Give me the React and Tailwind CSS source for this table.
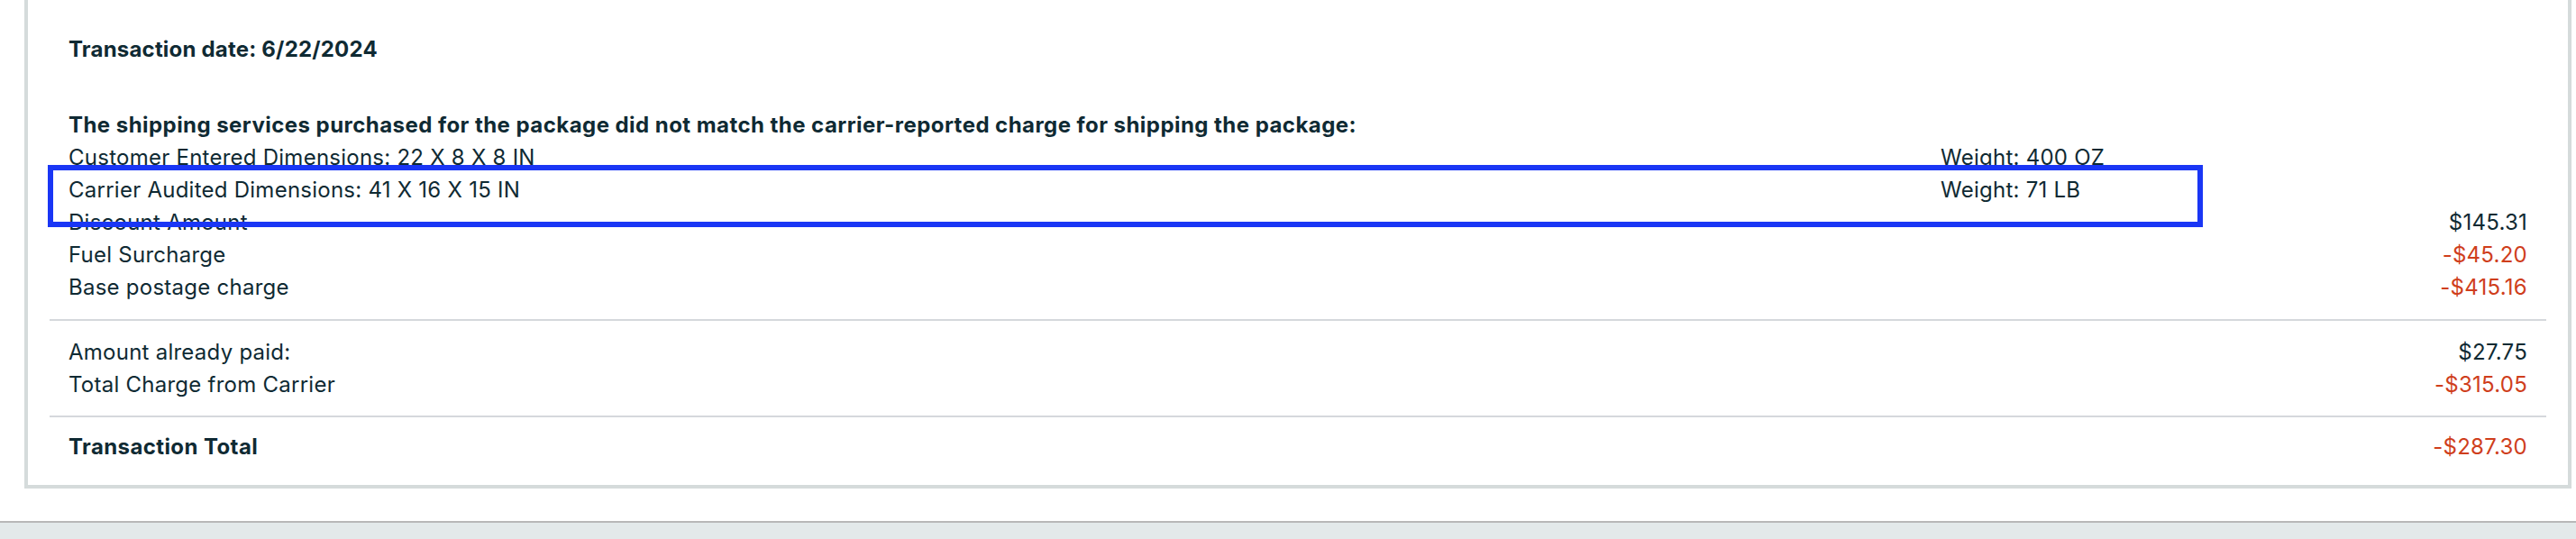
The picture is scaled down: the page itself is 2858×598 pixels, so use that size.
import React from "react";

const TEXT = "text-[#0f2a33]";
const RED = "text-[#cf3e1c]";

function Row({ label, value, negative, bold }) {
  return (
    <div className="flex justify-between h-[36px] leading-[36px]">
      <span className={bold ? "font-bold tracking-[0.4px]" : ""}>{label}</span>
      {value && <span className={negative ? RED : ""}>{value}</span>}
    </div>
  );
}

function DimRow({ label, weight }) {
  return (
    <div className="flex h-[36px] leading-[36px]">
      <span className="w-[2077px] shrink-0">{label}</span>
      <span>{weight}</span>
    </div>
  );
}

export default function App() {
  return (
    <div
      className={`relative w-[2858px] h-[598px] overflow-hidden bg-white flex flex-col text-[24px] tracking-[0.25px] ${TEXT}`}
      style={{ fontFamily: "Inter, 'Open Sans', Arial, sans-serif" }}
    >
      <div className="pl-[27px] pr-[5px]">
        <div className="border-x-4 border-b-4 border-[#d5dbdb] px-[24px] pt-[37px] pb-[24px]">
          <div className="px-[21px] pb-[17px] border-b-2 border-[#d5d8dc]">
            <div className="h-[36px] leading-[36px] font-bold tracking-[0.2px]">Transaction date: 6/22/2024</div>
            <div className="mt-[48px] h-[36px] leading-[36px] font-bold tracking-[0.45px]">
              The shipping services purchased for the package did not match the carrier-reported charge for shipping the package:
            </div>
            <DimRow label="Customer Entered Dimensions: 22 X 8 X 8 IN" weight="Weight: 400 OZ" />
            <DimRow label="Carrier Audited Dimensions: 41 X 16 X 15 IN" weight="Weight: 71 LB" />
            <Row label="Discount Amount" value="$145.31" />
            <Row label="Fuel Surcharge" value="-$45.20" negative />
            <Row label="Base postage charge" value="-$415.16" negative />
          </div>
          <div className="px-[21px] pt-[17px] pb-[16px] border-b-2 border-[#d5d8dc]">
            <Row label="Amount already paid:" value="$27.75" />
            <Row label="Total Charge from Carrier" value="-$315.05" negative />
          </div>
          <div className="px-[21px] pt-[15px]">
            <Row label="Transaction Total" value="-$287.30" negative bold />
          </div>
        </div>
      </div>
      <div className="mt-[36px] flex-1 border-t-2 border-[#b8b8b8] bg-[#e3e9ea]" />
      <div className="absolute left-[53px] top-[183px] w-[2391px] h-[69px] border-[6px] border-[#1a36f5]" />
    </div>
  );
}
